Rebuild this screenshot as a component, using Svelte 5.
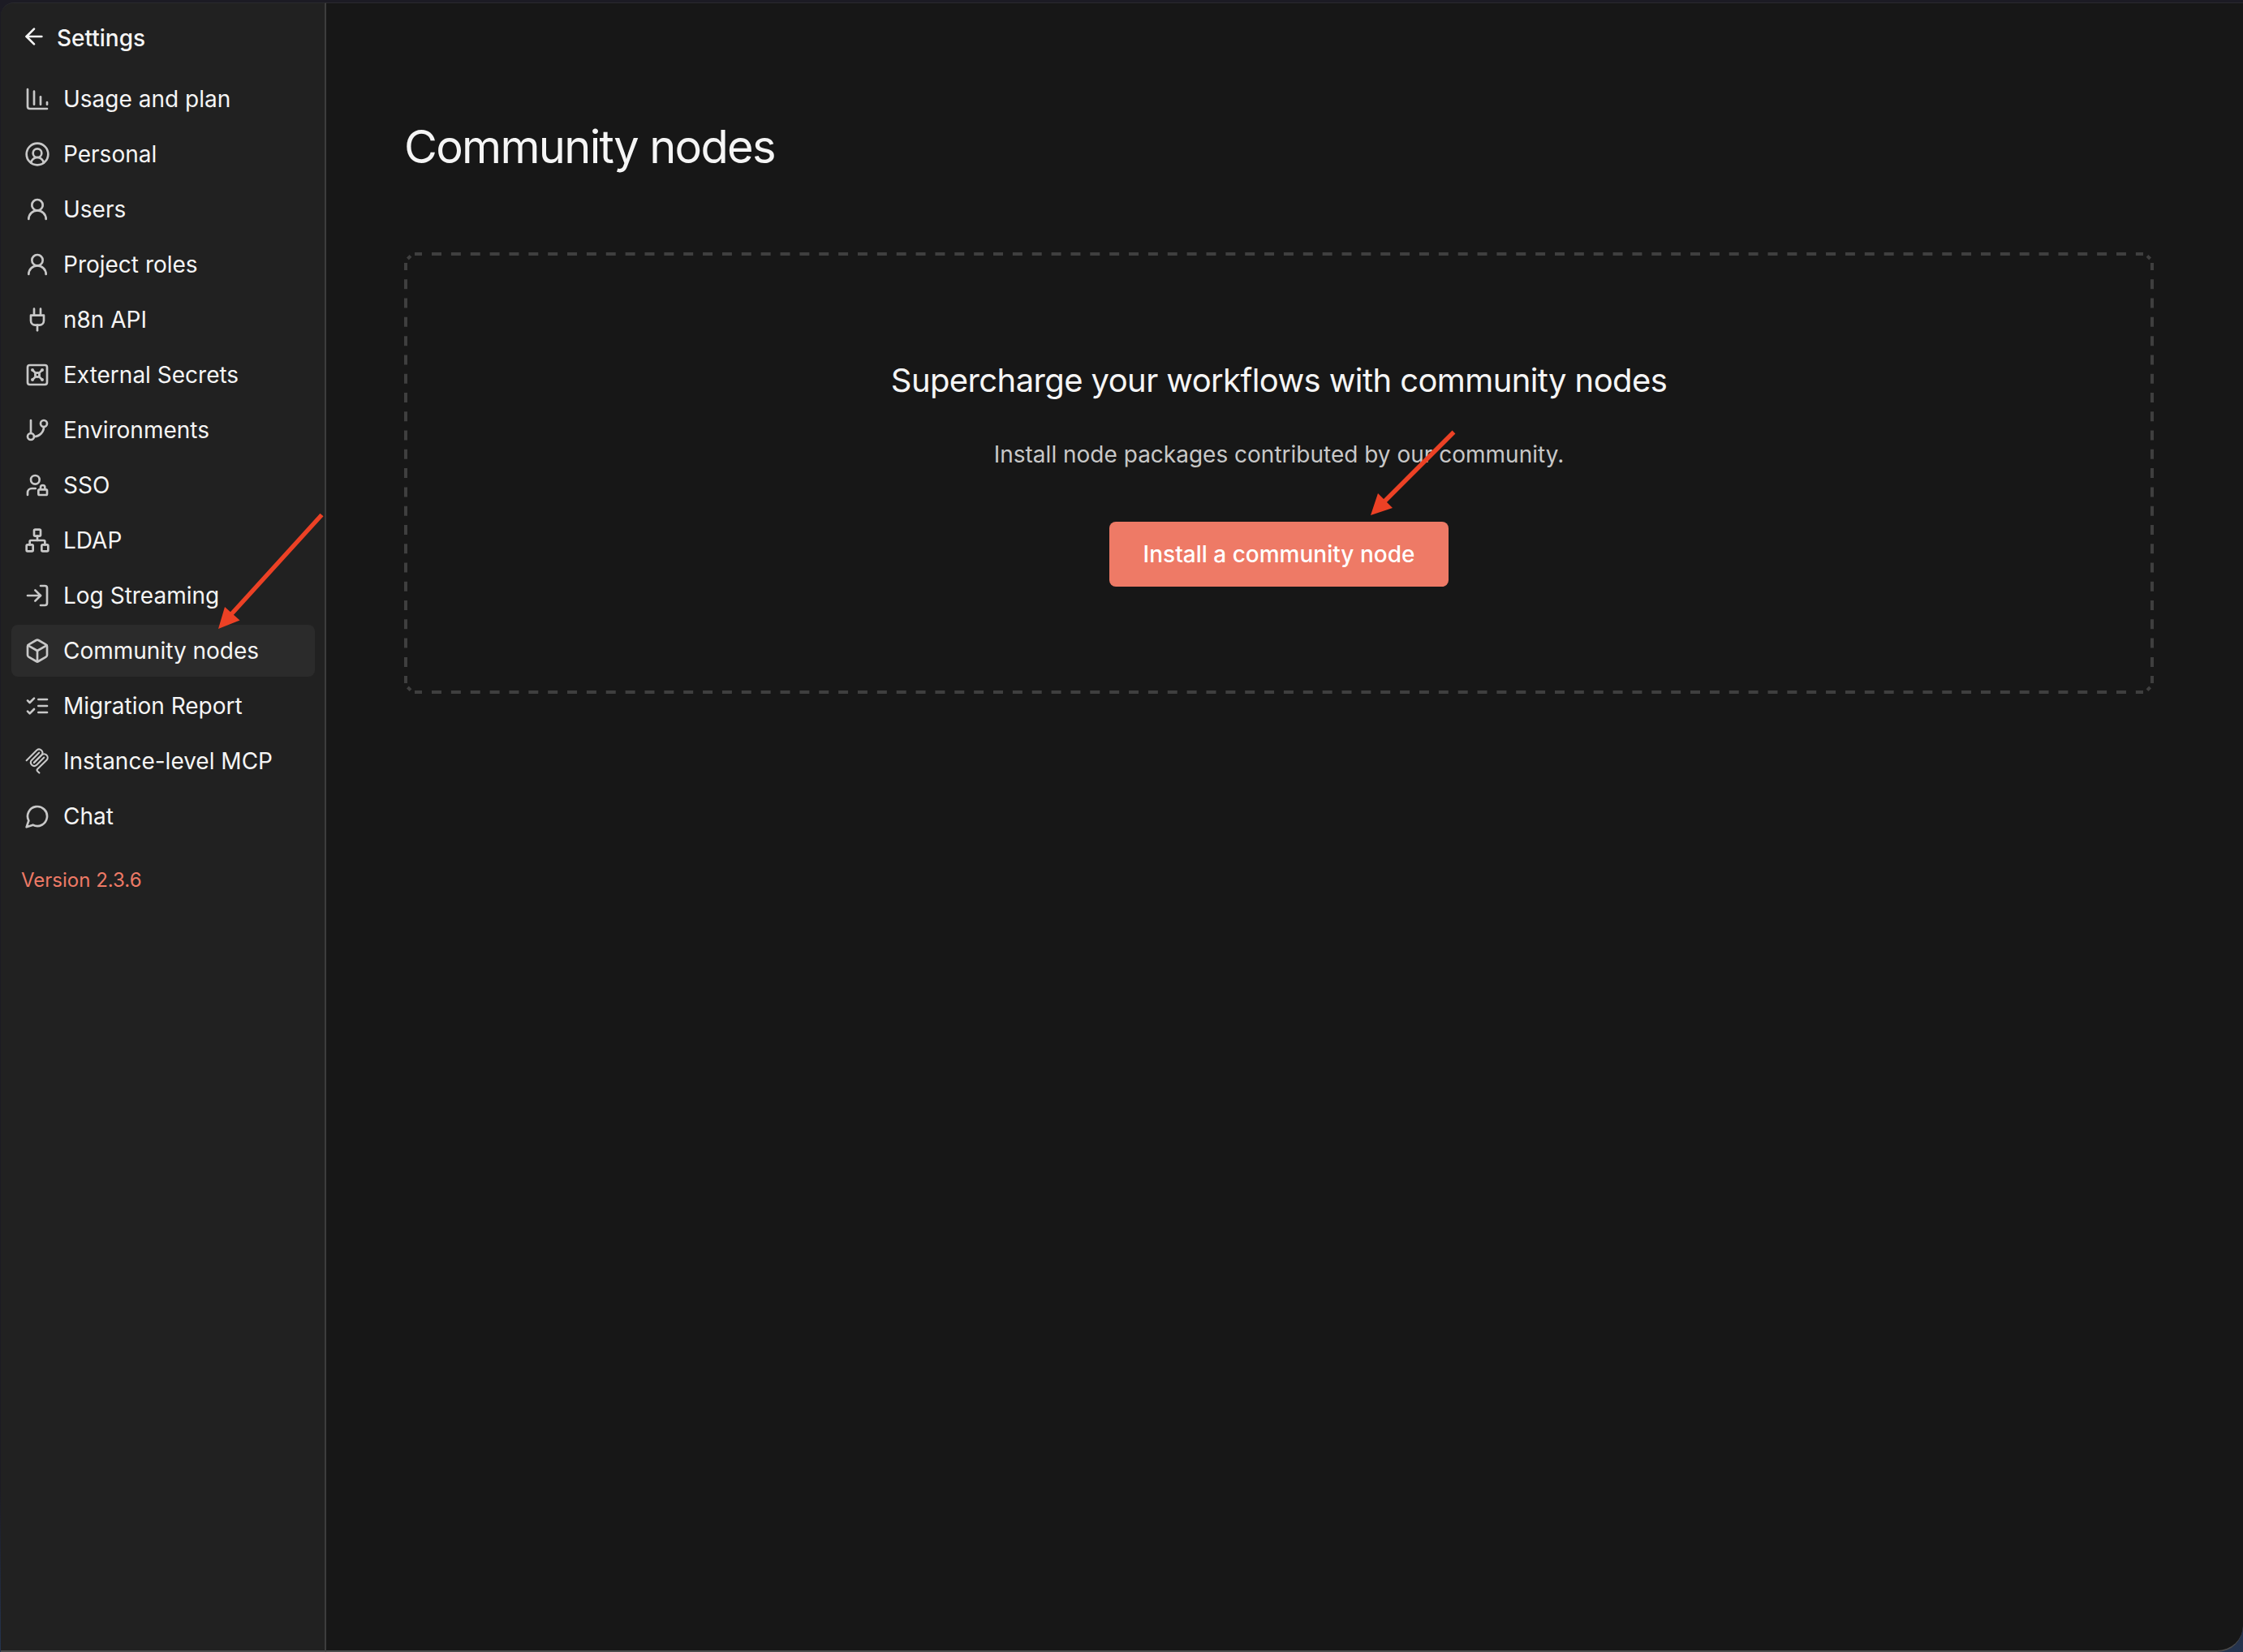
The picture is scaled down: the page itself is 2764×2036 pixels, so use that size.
<script>
  const items = [
    { label: 'Usage and plan', icon: 'chart' },
    { label: 'Personal', icon: 'circleUser' },
    { label: 'Users', icon: 'user' },
    { label: 'Project roles', icon: 'user' },
    { label: 'n8n API', icon: 'plug' },
    { label: 'External Secrets', icon: 'vault' },
    { label: 'Environments', icon: 'branch' },
    { label: 'SSO', icon: 'userLock' },
    { label: 'LDAP', icon: 'network' },
    { label: 'Log Streaming', icon: 'logIn' },
    { label: 'Community nodes', icon: 'box', active: true },
    { label: 'Migration Report', icon: 'listChecks' },
    { label: 'Instance-level MCP', icon: 'mcp' },
    { label: 'Chat', icon: 'chat' },
  ];

  const icons = {
    chart: ['M3 3v16a2 2 0 0 0 2 2h16', 'M9 17V5', 'M15 17v-7', 'M21 17v-2'],
    circleUser: ['M17.925 20.056a6 6 0 0 0-11.851.001', 'M8 11a4 4 0 1 0 8 0a4 4 0 1 0-8 0', 'M2 12a10 10 0 1 0 20 0a10 10 0 1 0-20 0'],
    user: ['M7 8a5 5 0 1 0 10 0a5 5 0 1 0-10 0', 'M20 21a8 8 0 0 0-16 0'],
    plug: ['M12 22v-5', 'M9 8V2', 'M15 8V2', 'M18 8v5a4 4 0 0 1-4 4h-4a4 4 0 0 1-4-4V8Z'],
    vault: [
      'M5 3h14a2 2 0 0 1 2 2v14a2 2 0 0 1-2 2H5a2 2 0 0 1-2-2V5a2 2 0 0 1 2-2Z',
      'M7 7.5a.5.5 0 1 0 1 0a.5.5 0 1 0-1 0', 'm7.9 7.9 2.7 2.7',
      'M16 7.5a.5.5 0 1 0 1 0a.5.5 0 1 0-1 0', 'm13.4 10.6 2.7-2.7',
      'M7 16.5a.5.5 0 1 0 1 0a.5.5 0 1 0-1 0', 'm7.9 16.1 2.7-2.7',
      'M16 16.5a.5.5 0 1 0 1 0a.5.5 0 1 0-1 0', 'm13.4 13.4 2.7 2.7',
      'M10 12a2 2 0 1 0 4 0a2 2 0 1 0-4 0',
    ],
    branch: ['M6 3v12', 'M15 6a3 3 0 1 0 6 0a3 3 0 1 0-6 0', 'M3 18a3 3 0 1 0 6 0a3 3 0 1 0-6 0', 'M18 9a9 9 0 0 1-9 9'],
    userLock: ['M6 7a4 4 0 1 0 8 0a4 4 0 1 0-8 0', 'M10.3 15H7a4 4 0 0 0-4 4v2', 'M15 15.5V14a2 2 0 0 1 4 0v1.5', 'M13.9 16h6.2a.9.9 0 0 1 .9.9v3.2a.9.9 0 0 1-.9.9h-6.2a.9.9 0 0 1-.9-.9v-3.2a.9.9 0 0 1 .9-.9Z'],
    network: [
      'M17 16h4a1 1 0 0 1 1 1v4a1 1 0 0 1-1 1h-4a1 1 0 0 1-1-1v-4a1 1 0 0 1 1-1Z',
      'M3 16h4a1 1 0 0 1 1 1v4a1 1 0 0 1-1 1H3a1 1 0 0 1-1-1v-4a1 1 0 0 1 1-1Z',
      'M10 2h4a1 1 0 0 1 1 1v4a1 1 0 0 1-1 1h-4a1 1 0 0 1-1-1V3a1 1 0 0 1 1-1Z',
      'M5 16v-3a1 1 0 0 1 1-1h12a1 1 0 0 1 1 1v3', 'M12 12V8',
    ],
    logIn: ['m10 17 5-5-5-5', 'M15 12H3', 'M15 3h4a2 2 0 0 1 2 2v14a2 2 0 0 1-2 2h-4'],
    box: ['M21 8a2 2 0 0 0-1-1.73l-7-4a2 2 0 0 0-2 0l-7 4A2 2 0 0 0 3 8v8a2 2 0 0 0 1 1.73l7 4a2 2 0 0 0 2 0l7-4A2 2 0 0 0 21 16Z', 'm3.3 7 8.7 5 8.7-5', 'M12 22V12'],
    listChecks: ['m3 17 2 2 4-4', 'm3 7 2 2 4-4', 'M13 6h8', 'M13 12h8', 'M13 18h8'],
    mcp: [
      'M2 11.4 11.5 1.9a3.2 3.2 0 0 1 4.5 4.5L8.9 13.5',
      'M9 13.4 16 6.4a3.2 3.2 0 0 1 4.5 0l.1.1a3.2 3.2 0 0 1 0 4.5l-8.6 8.5a1.1 1.1 0 0 0 0 1.6l1.8 1.8',
      'M13.7 4.2 6.7 11.2a3.2 3.2 0 0 0 4.5 4.5l7-7',
    ],
    chat: ['M7.9 20A9 9 0 1 0 4 16.1L2 22Z'],
  };
</script>

<div class="window">
  <aside>
    <header>
      <svg class="back" viewBox="0 0 24 24"><path d="m12 19-7-7 7-7" /><path d="M19 12H5" /></svg>
      <span>Settings</span>
    </header>
    <nav>
      {#each items as item}
        <a class:active={item.active}>
          <svg class:thin={item.icon === 'mcp'} viewBox="0 0 24 24">{#each icons[item.icon] as d}<path {d} />{/each}</svg>
          <span>{item.label}</span>
        </a>
      {/each}
    </nav>
    <p class="version">Version 2.3.6</p>
  </aside>
  <main>
    <h1>Community nodes</h1>
    <section>
      <h2>Supercharge your workflows with community nodes</h2>
      <p>Install node packages contributed by our community.</p>
      <button>Install a community node</button>
      <svg class="frame" viewBox="0 0 2156 544">
        <path class="across" d="M34 2H2134M34 542H2134" />
        <path class="down" d="M2 33.3V520M2154 33.3V520" />
        <path d="M13 2h9M2134 2h9M13 542h9M2134 542h9M2 13v9M2154 13v9M2 522v9M2154 522v9" />
        <path d="M4.4 8 8 4.4M2148 4.4l3.6 3.6M4.4 536l3.6 3.6M2148 539.6l3.6-3.6" />
      </svg>
    </section>
  </main>
  <svg class="arrows" viewBox="0 0 2764 2036">
    <path class="shaft" d="M396.5 634.5 285 757M1791.5 532.5 1706 618" />
    <path d="M269 775 277 748 295.5 764.5ZM1689 635 1698 608 1716 626Z" />
  </svg>
</div>

<style>
  :global(body) { background: #1c1b24; }
  .window { position: relative; box-sizing: border-box; width: 2764px; height: 2036px; padding: 3px 0 0 1px; display: flex; overflow: hidden; background: linear-gradient(#1c1b24 90%, #25344f); font-family: Inter, sans-serif; color: #f5f5f5; }
  aside { box-sizing: border-box; width: 401px; background: #212121; border-top: 1px solid #2a2a2e; border-right: 2px solid #3d3d3d; border-bottom: 2px solid #4c4c4c; border-top-left-radius: 16px; }
  header { display: flex; align-items: center; gap: 12px; height: 86px; box-sizing: border-box; padding: 0 0 0 25px; font-size: 28px; font-weight: 500; }
  nav { display: flex; flex-direction: column; gap: 4px; padding: 0 12px 0 13px; }
  a { display: flex; align-items: center; height: 64px; box-sizing: border-box; padding-left: 16px; gap: 16px; border-radius: 8px; font-size: 28px; white-space: nowrap; }
  a.active { background: #2b2b2b; }
  svg { fill: none; stroke: #c8c8c8; stroke-width: 2; stroke-linecap: round; stroke-linejoin: round; }
  a svg { width: 32px; height: 32px; flex: none; overflow: visible; }
  a svg.thin { stroke-width: 1.6; }
  .back { width: 32px; height: 32px; margin-bottom: 4px; stroke: #f5f5f5; }
  .version { margin: 31px 0 0 25px; font-size: 24px; line-height: 32px; color: #ee7a66; }
  main { flex: 1; box-sizing: border-box; background: #171717; padding: 142px 110px 0 96px; border-top: 1px solid #2a2a2e; border-bottom: 2px solid #4c4c4c; border-bottom-right-radius: 32px; }
  h1 { margin: 0; font-size: 56px; line-height: 70px; font-weight: 400; letter-spacing: -1.68px; white-space: nowrap; }
  section { position: relative; box-sizing: border-box; height: 544px; margin-top: 95px; padding-top: 133px; display: flex; flex-direction: column; align-items: center; }
  h2 { margin: 0; font-size: 40px; line-height: 50px; font-weight: 400; letter-spacing: -0.6px; }
  section p { margin: 46px 0 0; font-size: 28px; line-height: 40px; color: #c8c8c8; }
  button { margin-top: 63px; width: 418px; height: 80px; padding: 0; border: 0; border-radius: 8px; background: #ee7a66; color: #fff; font: 500 28px Inter, sans-serif; }
  .frame { position: absolute; inset: 0; width: 100%; height: 100%; stroke: #3f3f3f; stroke-width: 4; stroke-linecap: butt; }
  .across { stroke-dasharray: 12 11.862; }
  .down { stroke-dasharray: 12 11.28; }
  .arrows { position: absolute; inset: 0; width: 100%; height: 100%; fill: #ec4125; stroke: none; }
  .arrows .shaft { stroke: #ec4125; stroke-width: 5.5; stroke-linecap: butt; }
</style>
